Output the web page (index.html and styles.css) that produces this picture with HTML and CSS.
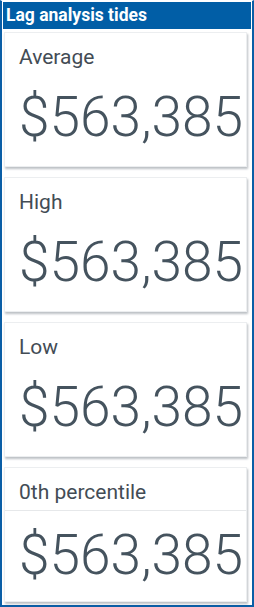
FILE: index.html
```html
<!DOCTYPE html>
<html lang="en">
<head>
    <meta charset="UTF-8">
    <title>Lag analysis tides</title>
    <link rel="stylesheet" href="styles.css">
</head>
<body>
    <div class="frame">
        <h1 class="title">Lag analysis tides</h1>
        <div class="card">
            <div class="label">Average</div>
            <div class="value">$563,385</div>
        </div>
        <div class="card">
            <div class="label">High</div>
            <div class="value">$563,385</div>
        </div>
        <div class="card">
            <div class="label">Low</div>
            <div class="value">$563,385</div>
        </div>
        <div class="card">
            <div class="label divided">0th percentile</div>
            <div class="value">$563,385</div>
        </div>
    </div>
</body>
</html>
```

FILE: styles.css
```css
body {
    margin: 0;
    font-family: Roboto, "Liberation Sans", sans-serif;
    background-color: #fff;
}
.frame {
    height: 607px;
    box-sizing: border-box;
    border: 2px solid #0a5ea6;
    border-top: 1px solid #fff;
    padding: 1px 1px 0 1px;
}
.title {
    margin: 0;
    background-color: #015ea6;
    color: #fff;
    font-size: 17.5px;
    font-weight: bold;
    line-height: 27px;
    padding-left: 3px;
}
.card {
    height: 135px;
    margin: 3px 4px 10px 1px;
    background-color: #fff;
    border: 1px solid #eceef0;
    box-shadow: 1px 2px 2px rgba(90, 100, 110, 0.4);
    box-sizing: border-box;
}
.label {
    font-size: 21px;
    color: #434c55;
    padding: 12px 14px 4px;
}
.label.divided {
    border-bottom: 1px solid #e6e8ea;
    padding-bottom: 6px;
}
.value {
    font-size: 55px;
    font-weight: 300;
    color: #45535e;
    padding: 12px 0 0 14px;
    white-space: nowrap;
}
```
